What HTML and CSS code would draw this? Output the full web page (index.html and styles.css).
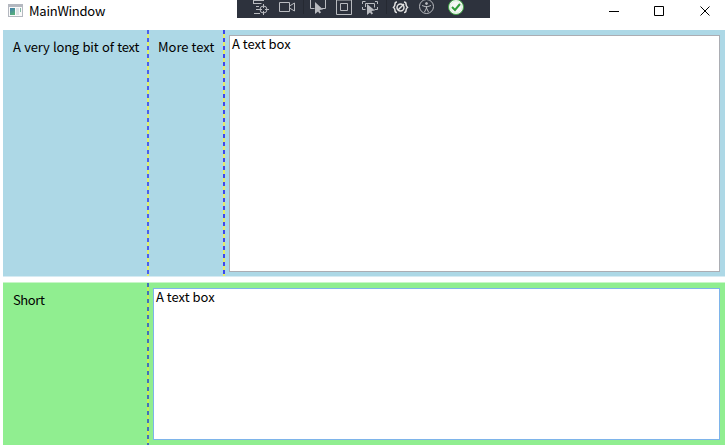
FILE: index.html
```html
<!DOCTYPE html>
<html lang="en">
<head>
<meta charset="utf-8">
<title>MainWindow</title>
<link rel="stylesheet" href="styles.css">
</head>
<body>
<div class="window">
  <header class="titlebar">
    <svg class="app-icon" width="15" height="13" viewBox="0 0 15 13"><defs><linearGradient id="g" x1="0" y1="0" x2="0.4" y2="1"><stop offset="0" stop-color="#3f7cac"/><stop offset="1" stop-color="#55ad7c"/></linearGradient></defs><path fill="#b4b8c0" d="M0 0h15v13H0z"/><path fill="#fafafa" d="M1 3h13v9H1z"/><path fill="url(#g)" d="M2 4h5v7H2z"/><path fill="#dce3e6" d="M8 4h3v7H8z"/><path fill="#83b8a5" d="M12 4h1v4h-1z"/></svg>
    <span class="title">MainWindow</span>
    <div class="caption-buttons">
      <svg width="100" height="12" viewBox="0 0 100 12" fill="none" stroke="#000" stroke-width="1"><path d="M0 6.500h10M45.500 1.500h9v9h-9z"/><path d="M91.500 1.500l9 9M100.500 1.500l-9 9"/></svg>
    </div>
    <div class="debug-bar">
      <svg width="253" height="18" viewBox="0 0 253 18" fill="none" stroke="#b9bbc0" stroke-width="1">
        <path stroke="#252932" d="M66.500 0v14M149.500 0v14"/>
        <path d="M16 .5h11M16.500 3.500h8M19 6.500h3M19 9.500h2M17 13.500h6M16.500 0v4"/>
        <circle cx="26.500" cy="9.500" r="3.500"/><path d="M26.500 4v4M26.500 11v4M21 9.500h4M28 9.500h4"/>
        <path d="M42.500 2.500h10v9h-10zM52.500 6l5-3v8l-5-3"/>
        <path d="M73.500 0v8.500h4M88.500 0v8.500h-4"/><path fill="#b9bbc0" stroke="none" d="M78 2v12l3-2.500 1.500 2 1.500-1-1.500-2.500 3.500-.5z"/>
        <path d="M99.500 0v14.500h15V0zM103.500 3.500h7v7h-7z"/>
        <path d="M125.500 4V1.500h3M138 1.500h2.500V4M125.500 7v2.500h3M140.500 7v2.500h-3M128.500 7V3.500h9v4"/><path fill="#b9bbc0" stroke="none" d="M130 4v11l3-2.500 1.500 2 1.500-1-1.500-2.500 3.500-.5z"/>
        <g stroke="#e1e1e1" stroke-width="1.500"><path d="M160 2q-2 0-2 2t-1.500 3.500q1.500 1 1.500 3t2 2M167 2q2 0 2 2t1.500 3.500q-1.500 1-1.500 3t-2 2"/><circle cx="163.500" cy="7.500" r="3.500"/><path d="M161 10l6-6"/></g>
        <circle cx="189.500" cy="6.500" r="7"/><circle cx="189.500" cy="3.500" r="1" fill="#b9bbc0"/><path d="M185 5.500l4.500 1.500 4.500-1.500M189.500 6v2l-2 4M189.500 8l2 4"/>
        <circle cx="219" cy="7" r="7.500" fill="#f4f6f4" stroke="#3fa345"/><circle cx="219" cy="7" r="6" stroke="#dcefdc"/><path stroke="#2f9c38" stroke-width="2" d="M215 7l3 3 5-6"/>
      </svg>
    </div>
  </header>
  <main class="content">
    <section class="panel top">
      <div class="cell first"><span class="long">A very long bit of text</span></div>
      <div class="cell second"><span class="more">More text</span></div>
      <div class="field"><div class="textbox">A text box</div></div>
    </section>
    <section class="panel bottom">
      <div class="cell first"><span class="short">Short</span></div>
      <div class="field"><div class="textbox">A text box</div></div>
    </section>
  </main>
</div>
</body>
</html>
```
FILE: styles.css
```css
* { box-sizing: border-box; }
body { margin: 0; background: #fff; color: #000; font: 13px/18px "Noto Sans CJK SC", "Noto Sans", sans-serif; overflow: hidden; }
.window { width: 726px; height: 446px; display: flex; flex-direction: column; position: relative; }
.titlebar { height: 30px; display: flex; align-items: flex-start; padding: 4px 15px 0 8px; }
.app-icon { display: block; }
.title { margin: -2px 0 0 6px; white-space: nowrap; letter-spacing: -.25px; }
.caption-buttons { margin-left: auto; margin-right: 2px; padding-top: 1px; }
.caption-buttons svg { display: block; overflow: visible; }
.debug-bar { position: absolute; left: 237px; top: 0; width: 253px; height: 18px; background: #2d323d; }
.debug-bar svg { display: block; }
.content { padding: 0 1px 0 3px; display: flex; flex-direction: column; gap: 5px; }
.panel { display: flex; white-space: nowrap; }
.top { height: 247px; background: #add8e6; border-bottom: 1px solid #d6ebf3; }
.bottom { height: 163px; background: #90ee90; border-top: 1px solid #c8f6c8; }
.cell { padding: 8px 10px 0; background: repeating-linear-gradient(#4a60ec 0 4px, #dff068 4px 8px) right top / 2px 100% no-repeat; }
.first { width: 146px; }
.second { width: 76px; padding-left: 9px; background-image: repeating-linear-gradient(#3d48ee 0 4px, #e6f060 4px 8px); }
.long { letter-spacing: -.25px; word-spacing: 1px; }
.short { letter-spacing: -.4px; }
.bottom .cell { background-image: repeating-linear-gradient(#4470b8 0 4px, #c8f050 4px 8px); }
.field { flex: 1; padding: 5px 5px 4px 4px; }
.textbox { height: 100%; border: 1px solid #abadb3; background: #fff; padding: 0 2px; line-height: 15px; }
.bottom .field { padding-bottom: 5px; }
.bottom .textbox { border-color: #7eb4ea; }
```
